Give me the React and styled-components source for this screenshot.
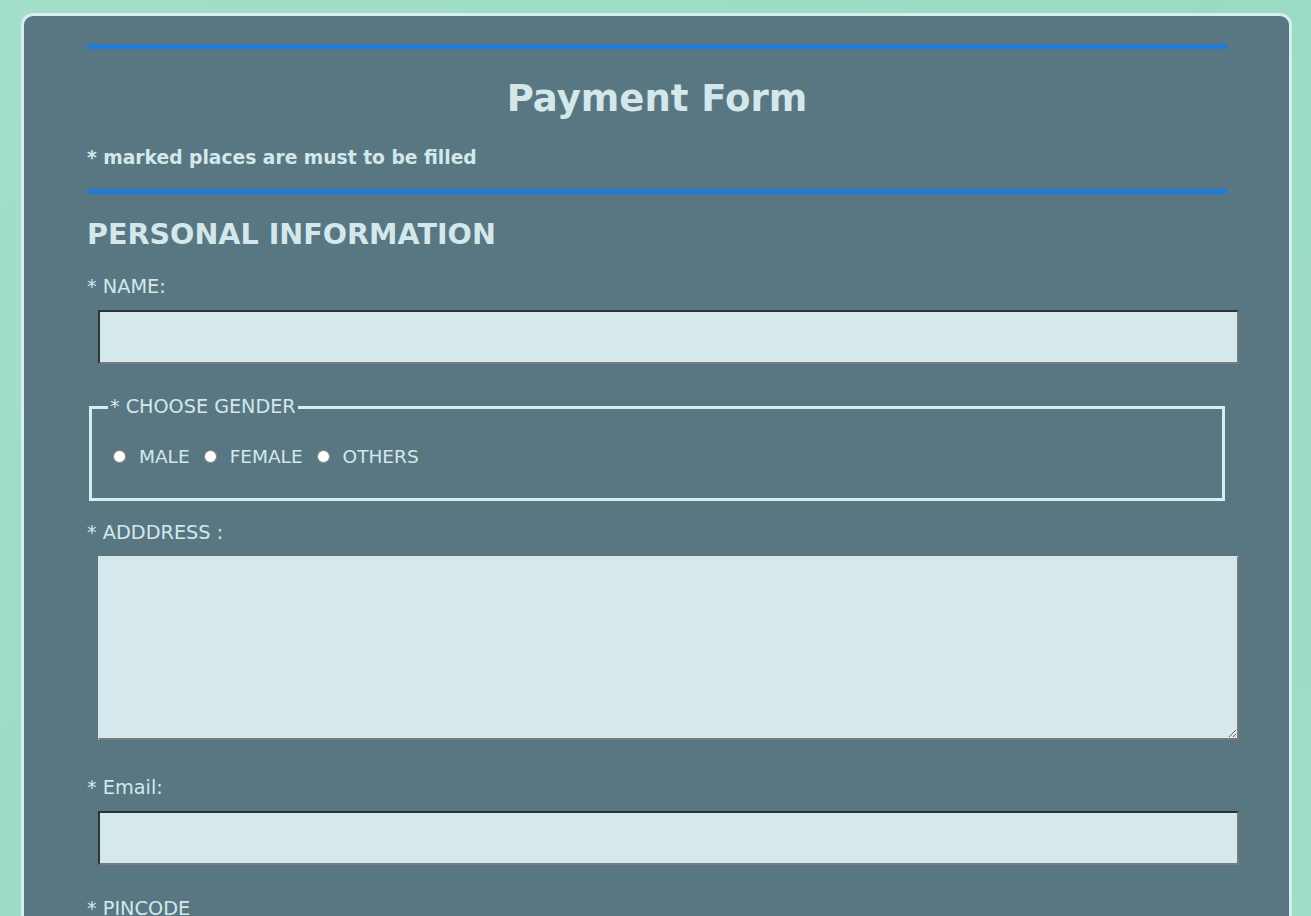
import React from "react";
import styled, { createGlobalStyle } from "styled-components";

const Global = createGlobalStyle`
  html, body { margin: 0; padding: 0; }
  body {
    background: linear-gradient(135deg, #a2dfcb 0%, #9adbc4 50%, #9fdec8 100%);
    font-family: "DejaVu Sans", Verdana, sans-serif;
    min-height: 100vh;
  }
`;

const Page = styled.div`
  padding: 13px 19px 40px 21px;
`;

const Card = styled.form`
  box-sizing: border-box;
  width: 1271px;
  background: #587782;
  border: 3px solid #d9ecef;
  border-radius: 12px;
  padding: 28px 62px 60px 63px;
  color: #d4e8ec;
`;

const Rule = styled.div`
  height: 5px;
  background: #1f7bd6;
`;

const Title = styled.h1`
  margin: 28px 0 0;
  font-size: 37px;
  font-weight: bold;
  text-align: center;
  line-height: 43px;
`;

const Note = styled.p`
  margin: 27px 0 20px;
  font-size: 18.7px;
  font-weight: bold;
  line-height: 22px;
`;

const Section = styled.h2`
  margin: 24px 0 25px;
  font-size: 28.6px;
  font-weight: bold;
  line-height: 33px;
`;

const Label = styled.label`
  display: block;
  font-size: 19.3px;
  line-height: 22px;
`;

const TextInput = styled.input`
  display: block;
  box-sizing: border-box;
  width: calc(100% + 1px);
  height: 54px;
  margin: 12px 0 0 11px;
  background: #d5e8eb;
  border-style: solid;
  border-width: 2px;
  border-color: #2c3535 #7a7a7a #7a7a7a #2c3535;
  font-family: inherit;
  font-size: 18px;
  padding: 0 8px;
  outline: none;
`;

const TextArea = styled.textarea`
  display: block;
  box-sizing: border-box;
  width: calc(100% + 1px);
  height: 184px;
  margin: 12px 0 0 11px;
  background: #d5e8eb;
  border-style: solid;
  border-width: 1px 2px 2px 1px;
  border-color: #d5e8eb #7a7a7a #7a7a7a #d5e8eb;
  font-family: inherit;
  font-size: 18px;
  padding: 8px;
  outline: none;
`;

const Field = styled.div`
  margin-bottom: ${(p) => p.$gap || "34px"};
`;

const Fieldset = styled.fieldset`
  margin: 0 2px 21px;
  border: 3px solid #d9ecef;
  padding: 28px 16px 30px;
`;

const Legend = styled.legend`
  font-size: 19.2px;
  line-height: 22px;
  padding: 0 2px;
`;

const RadioRow = styled.div`
  display: flex;
  align-items: center;
  height: 22px;
`;

const Radio = styled.input.attrs({ type: "radio" })`
  width: 13px;
  height: 13px;
  margin: 0 0 2px ${(p) => (p.$first ? "5px" : "14px")};
`;

const RadioLabel = styled.label`
  margin-left: 13px;
  font-size: 18.5px;
  line-height: 22px;
`;

export default function App() {
  return (
    <>
      <Global />
      <Page>
        <Card onSubmit={(e) => e.preventDefault()}>
          <Rule />
          <Title>Payment Form</Title>
          <Note>* marked places are must to be filled</Note>
          <Rule />
          <Section>PERSONAL INFORMATION</Section>

          <Field $gap="32px">
            <Label htmlFor="name">* NAME:</Label>
            <TextInput id="name" type="text" />
          </Field>

          <Fieldset>
            <Legend>* CHOOSE GENDER</Legend>
            <RadioRow>
              <Radio $first name="gender" id="male" />
              <RadioLabel htmlFor="male">MALE</RadioLabel>
              <Radio name="gender" id="female" />
              <RadioLabel htmlFor="female">FEMALE</RadioLabel>
              <Radio name="gender" id="others" />
              <RadioLabel htmlFor="others">OTHERS</RadioLabel>
            </RadioRow>
          </Fieldset>

          <Field $gap="37px">
            <Label htmlFor="address">* ADDDRESS :</Label>
            <TextArea id="address" />
          </Field>

          <Field $gap="33px">
            <Label htmlFor="email">* Email:</Label>
            <TextInput id="email" type="email" />
          </Field>

          <Field>
            <Label htmlFor="pincode">* PINCODE</Label>
            <TextInput id="pincode" type="text" />
          </Field>
        </Card>
      </Page>
    </>
  );
}
